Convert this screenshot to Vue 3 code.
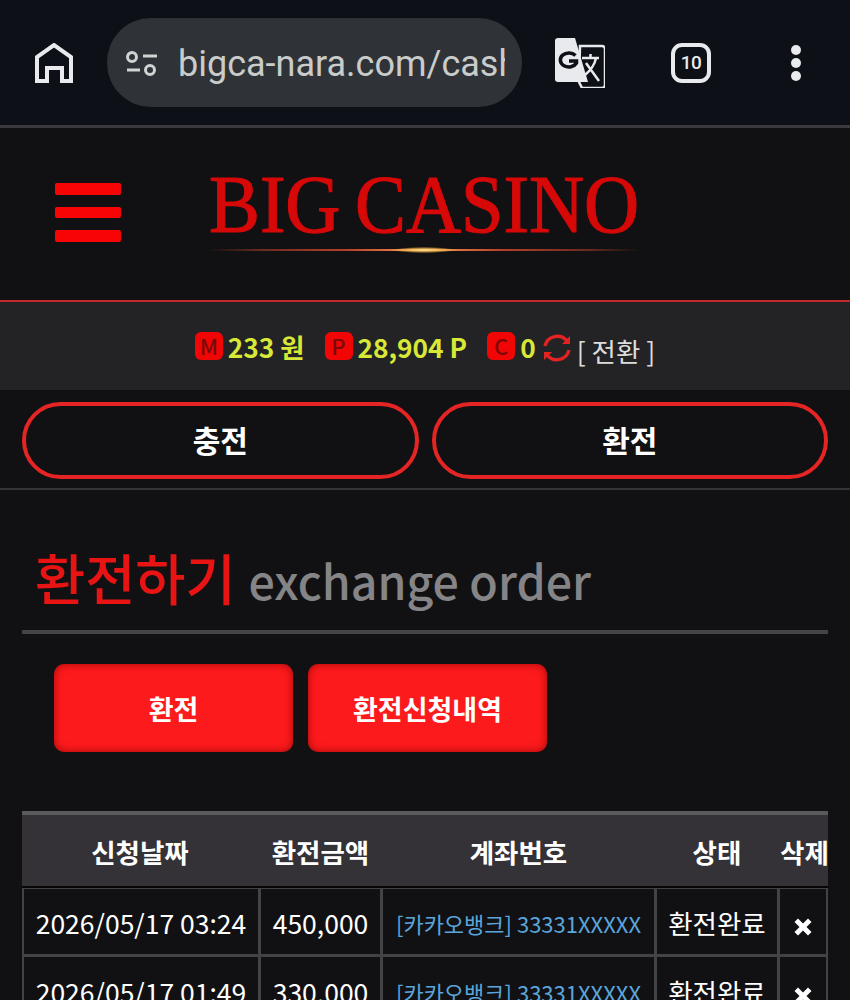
<template>
  <div class="page">
    <!-- mobile browser toolbar -->
    <div class="toolbar">
      <svg class="home" viewBox="0 0 38 40" fill="none" stroke="#e8eaed" stroke-width="4">
        <path d="M2 38V14L19 2l17 12v24H27V25H12v13z" />
      </svg>
      <div class="url">
        <svg class="tune" viewBox="0 0 34 28" fill="none" stroke="#d0d3d1" stroke-width="3">
          <circle cx="7" cy="8" r="4.500" />
          <path d="M18 7h14M2 21h13" />
          <circle cx="25" cy="21" r="4.500" />
        </svg>
        <span class="url-text">bigca-nara.com/cash</span>
      </div>
      <svg class="translate" viewBox="0 0 50 50">
        <path d="M25 8h22a3 3 0 0 1 3 3v36a3 3 0 0 1-3 3H27l-3-6z" fill="#0d1117" stroke="#e8eaed" stroke-width="2.500" />
        <path d="M3 0h17l13 44H3a3 3 0 0 1-3-3V3a3 3 0 0 1 3-3z" fill="#e8eaed" />
        <path d="M20.500 17.500A8.500 7 0 1 0 21.500 25v-2H14" fill="none" stroke="#0d1117" stroke-width="3.500" />
        <path d="M27 20h17M35.500 16v4M41 20c-1 6-6 13-11 17M31 25l13 18" fill="none" stroke="#e8eaed" stroke-width="2.500" />
      </svg>
      <div class="tabs">10</div>
      <div class="dots"><i></i><i></i><i></i></div>
    </div>

    <header class="top">
      <div class="burger"><i></i><i></i><i></i></div>
      <div class="logo">
        <div class="logo-text">BIG CASINO</div>
        <div class="logo-line"></div>
      </div>
    </header>

    <div class="balance">
      <span class="badge">M</span><b class="amount">233 원</b>
      <span class="badge second">P</span><b class="amount">28,904 P</b>
      <span class="badge second">C</span><b class="amount">0</b>
      <svg class="sync" viewBox="0 0 30 30" fill="none" stroke="#e32222" stroke-width="3.400">
        <path d="M3 13A12.500 12.500 0 0 1 25 8" />
        <path d="M27 17A12.500 12.500 0 0 1 5 22" />
        <path d="M28 3v8h-8z" fill="#e32222" stroke="none" />
        <path d="M2 27v-8h8z" fill="#e32222" stroke="none" />
      </svg>
      <span class="switch">[ 전환 ]</span>
    </div>

    <nav class="pills">
      <a class="pill">충전</a>
      <a class="pill">환전</a>
    </nav>

    <section class="content">
      <h1 class="title"><span class="ko">환전하기</span><span class="en">exchange order</span></h1>
      <div class="actions">
        <a class="red-btn">환전</a>
        <a class="red-btn">환전신청내역</a>
      </div>

      <table class="list">
        <colgroup>
          <col class="c1" />
          <col class="c2" />
          <col class="c3" />
          <col class="c4" />
          <col class="c5" />
        </colgroup>
        <thead>
          <tr>
            <th>신청날짜</th>
            <th>환전금액</th>
            <th>계좌번호</th>
            <th>상태</th>
            <th>삭제</th>
          </tr>
        </thead>
        <tbody>
          <tr v-for="row in rows" :key="row.date">
            <td>{{ row.date }}</td>
            <td>{{ row.amount }}</td>
            <td class="account">{{ row.account }}</td>
            <td>{{ row.status }}</td>
            <td>
              <svg class="del" viewBox="0 0 20 20"><path d="M5 1.500l5 5 5-5 3.500 3.500-5 5 5 5-3.500 3.500-5-5-5 5L1.500 15l5-5-5-5z" fill="#fff" /></svg>
            </td>
          </tr>
        </tbody>
      </table>
    </section>
  </div>
</template>

<script setup>
const rows = [
  { date: '2026/05/17 03:24', amount: '450,000', account: '[카카오뱅크] 33331XXXXX', status: '환전완료' },
  { date: '2026/05/17 01:49', amount: '330,000', account: '[카카오뱅크] 33331XXXXX', status: '환전완료' }
]
</script>

<style>
html, body {
  margin: 0;
  background: #111114;
  overflow: hidden;
}
</style>

<style scoped>
.page {
  width: 850px;
  height: 1000px;
  overflow: hidden;
  background: #111114;
  font-family: "Noto Sans CJK KR", "Noto Sans", sans-serif;
  color: #fff;
}

.toolbar {
  height: 125px;
  background: #0d1117;
  border-bottom: 3px solid #3a3a3c;
  display: flex;
  align-items: center;
  padding-left: 35px;
}
.home {
  width: 38px;
  height: 40px;
  margin-top: 1px;
  flex: none;
}
.url {
  width: 415px;
  height: 89px;
  margin-left: 34px;
  border-radius: 44px;
  background: #2f3337;
  display: flex;
  align-items: center;
  padding-left: 18px;
  box-sizing: border-box;
  flex: none;
}
.tune {
  width: 34px;
  height: 28px;
  flex: none;
}
.url-text {
  margin-left: 19px;
  width: 327px;
  overflow: hidden;
  white-space: nowrap;
  font-family: Roboto, sans-serif;
  font-size: 36px;
  line-height: 46px;
  padding-top: 3px;
  color: #c9ccca;
}
.translate {
  width: 50px;
  height: 50px;
  margin-left: 33px;
  flex: none;
}
.tabs {
  width: 40px;
  height: 40px;
  margin-left: 66px;
  box-sizing: border-box;
  border: 4px solid #e8eaed;
  border-radius: 11px;
  font-family: Roboto, sans-serif;
  font-size: 19px;
  font-weight: 500;
  letter-spacing: -0.5px;
  color: #e8eaed;
  display: flex;
  align-items: center;
  justify-content: center;
  flex: none;
}
.dots {
  margin-left: 80px;
  display: flex;
  flex-direction: column;
  gap: 3px;
}
.dots i {
  width: 10px;
  height: 10px;
  border-radius: 50%;
  background: #e8eaed;
}

.top {
  height: 172px;
  background: #111113;
  border-bottom: 2px solid #c22a2a;
  display: flex;
  align-items: flex-start;
  padding-left: 55px;
}
.burger {
  width: 66px;
  margin-top: 55px;
  display: flex;
  flex-direction: column;
  gap: 12px;
}
.burger i {
  height: 11.500px;
  border-radius: 2px;
  background: #f80404;
}
.logo {
  margin-left: 88px;
  width: 430px;
  margin-top: 32px;
}
.logo-text {
  font-family: "Liberation Serif", serif;
  font-size: 83px;
  line-height: 88px;
  word-spacing: -5px;
  white-space: nowrap;
  color: #d60808;
  -webkit-text-stroke: 1.2px #d60808;
  transform: scaleX(0.92);
  transform-origin: left center;
}
.logo-line {
  height: 2px;
  margin-top: 1px;
  position: relative;
  background: linear-gradient(90deg, transparent, #6a2a20 12%, #b8402a 32%, #e07040 42%, #ffdc80 50%, #e07040 58%, #b8402a 68%, #6a2a20 88%, transparent);
}
.logo-line::after {
  content: "";
  position: absolute;
  left: 185px;
  top: -2px;
  width: 60px;
  height: 6px;
  border-radius: 50%;
  background: radial-gradient(ellipse, #ffe08a 0%, rgba(240, 170, 70, 0.7) 45%, transparent 75%);
}

.balance {
  height: 88px;
  background: #232325;
  display: flex;
  align-items: center;
  justify-content: center;
}
.badge {
  width: 28px;
  height: 28px;
  border-radius: 6px;
  background: #f20505;
  color: #7c0808;
  font-size: 22px;
  font-weight: 500;
  line-height: 27px;
  text-align: center;
}
.second {
  margin-left: 20px;
}
.amount {
  margin-left: 5px;
  font-size: 26.300px;
  font-weight: 700;
  color: #d8e836;
}
.sync {
  width: 30px;
  height: 30px;
  margin: 4px 0 0 6px;
}
.switch {
  margin: 8px 0 0 5px;
  font-size: 26.500px;
  color: #ddd;
}

.pills {
  height: 100px;
  padding: 12px 22px 0;
  box-sizing: border-box;
  display: flex;
  gap: 13px;
  border-bottom: 2px solid #343436;
  background: #111114;
}
.pill {
  flex: 1;
  height: 77px;
  box-sizing: border-box;
  border: 4px solid #e52424;
  border-radius: 39px;
  padding-bottom: 3px;
  font-size: 30px;
  font-weight: 700;
  display: flex;
  align-items: center;
  justify-content: center;
}

.content {
  padding: 0 22px;
}
.title {
  margin: 0;
  height: 144px;
  box-sizing: border-box;
  padding: 46px 0 0 13px;
  border-bottom: 4px solid #444446;
  font-weight: 500;
  line-height: 82px;
  white-space: nowrap;
}
.title .ko {
  font-size: 54.500px;
  color: #e81414;
}
.title .en {
  font-size: 46.500px;
  color: #858587;
  margin-left: 13px;
}

.actions {
  display: flex;
  gap: 15px;
  padding: 30px 0 0 32px;
}
.red-btn {
  width: 239px;
  height: 88px;
  border-radius: 10px;
  background: #fd1a1c;
  box-shadow: inset 0 0 8px rgba(120, 0, 0, 0.7);
  font-size: 27px;
  font-weight: 700;
  display: flex;
  align-items: center;
  justify-content: center;
}

.list {
  width: 806px;
  margin-top: 59px;
  table-layout: fixed;
  border-collapse: separate;
  border-spacing: 0;
}
.c1 { width: 239px; }
.c2 { width: 122px; }
.c3 { width: 274px; }
.c4 { width: 123px; }
.c5 { width: 48px; }

.list th {
  height: 77px;
  box-sizing: border-box;
  padding: 6px 3px 0 0;
  background: #343236;
  box-shadow: inset 0 4px 0 #5a5a5c;
  border-bottom: 2px solid #060606;
  font-size: 26.500px;
  font-weight: 700;
  white-space: nowrap;
}
.list th:last-child {
  padding-right: 2px;
}
.list td {
  height: 69px;
  box-sizing: border-box;
  padding: 3px 0 0;
  border-bottom: 3px solid #434345;
  border-right: 3px solid #434345;
  text-align: center;
  font-size: 26.500px;
  white-space: nowrap;
  background: #111114;
}
.list tbody tr:first-child td {
  box-shadow: inset 0 1px 0 #434345;
}
.list td:first-child {
  border-left: 2px solid #434345;
}
.list td:last-child {
  border-right-width: 2px;
}
.list td.account {
  color: #5aa6dc;
  font-size: 22px;
}
.del {
  width: 20px;
  height: 20px;
  vertical-align: middle;
}
</style>
